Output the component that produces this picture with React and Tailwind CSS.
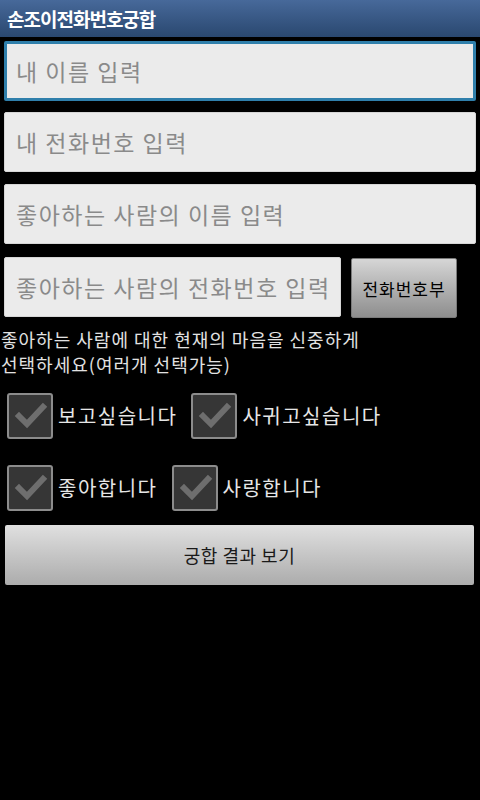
import React from "react";

function Field({ text, focused, className = "" }) {
  return (
    <div
      className={
        "h-[60px] flex items-center bg-[#ebebeb] text-[23px] tracking-[1.5px] text-[#8a8a8a] leading-none " +
        (focused
          ? "border-[3px] border-[#2f7fab] pl-[9px] rounded-[2px]"
          : "border border-[#d6d6d6] pl-[11px] rounded-[2px]") +
        " " +
        className
      }
    >
      <span className="whitespace-nowrap">{text}</span>
    </div>
  );
}

function Check({ label }) {
  return (
    <div className="flex items-center gap-[5px]">
      <div className="w-[46px] h-[46px] rounded-[3px] border-2 border-[#8c8c8c] bg-[#363636] flex items-center justify-center">
        <svg width="42" height="42" viewBox="0 0 42 42">
          <polyline
            points="10,21 18,29 34,12"
            fill="none"
            stroke="#6e6e6e"
            strokeWidth="6"
            strokeLinecap="square"
            strokeLinejoin="miter"
          />
        </svg>
      </div>
      <span className="text-[20px] tracking-[1.5px] text-[#e6e6e6] leading-none whitespace-nowrap">{label}</span>
    </div>
  );
}

export default function App() {
  return (
    <div className="w-[480px] h-[800px] bg-black font-['Noto_Sans_CJK_KR',sans-serif] overflow-hidden">
      <div className="h-[37px] bg-gradient-to-b from-[#47699a] to-[#2a4870] flex items-center pl-[7px]">
        <span className="text-white font-bold text-[19px] tracking-[-1px] leading-none">손조이전화번호궁합</span>
      </div>
      <div className="flex flex-col px-[4px] pt-[4px]">
        <Field text="내 이름 입력" focused />
        <Field text="내 전화번호 입력" className="mt-[11px]" />
        <Field text="좋아하는 사람의 이름 입력" className="mt-[12px]" />
        <div className="flex items-start mt-[13px]">
          <Field text="좋아하는 사람의 전화번호 입력" className="w-[337px] h-[59px]" />
          <div className="ml-[10px] mt-[1px] w-[106px] h-[60px] flex items-center justify-center bg-gradient-to-b from-[#d6d6d6] to-[#8e8e8e] border border-[#7a7a7a] rounded-[2px]">
            <span className="text-[17px] tracking-[1px] text-black leading-none">전화번호부</span>
          </div>
        </div>
        <div className="ml-[-3px] mt-[9px] text-[18px] tracking-[1px] leading-[25px] text-[#e2e2e2]">
          <div>좋아하는 사람에 대한 현재의 마음을 신중하게</div>
          <div>선택하세요(여러개 선택가능)</div>
        </div>
        <div className="flex items-center gap-[14px] ml-[3px] mt-[16px]">
          <Check label="보고싶습니다" />
          <Check label="사귀고싶습니다" />
        </div>
        <div className="flex items-center gap-[14px] ml-[3px] mt-[26px]">
          <Check label="좋아합니다" />
          <Check label="사랑합니다" />
        </div>
        <div className="ml-[1px] mr-[2px] mt-[14px] h-[60px] flex items-center justify-center bg-gradient-to-b from-[#e0e0e0] to-[#acacac] rounded-[2px]">
          <span className="text-[18px] tracking-[0.5px] text-[#1a1a1a] leading-none">궁합 결과 보기</span>
        </div>
      </div>
    </div>
  );
}
